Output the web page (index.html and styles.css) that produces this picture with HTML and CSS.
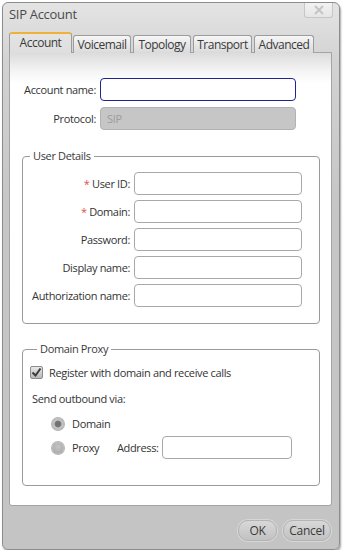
FILE: index.html
```html
<!DOCTYPE html>
<html lang="en">

<head>
    <meta charset="UTF-8">
    <title>SIP Account</title>
    <link rel="stylesheet" href="styles.css">
</head>

<body>
    <div class="window">
        <div class="titlebar">
            <span class="title">SIP Account</span>
            <span class="close">
                <svg width="12" height="10" viewBox="0 0 12 10">
                    <path d="M2 1 L10 9 M10 1 L2 9" stroke="#c4c4c4" stroke-width="2" fill="none" />
                </svg>
            </span>
        </div>

        <div class="tabs">
            <div class="tab active">Account</div>
            <div class="tab">Voicemail</div>
            <div class="tab">Topology</div>
            <div class="tab">Transport</div>
            <div class="tab">Advanced</div>
        </div>

        <div class="panel">
            <div class="row">
                <label class="labl wide">Account name:</label>
                <input class="field focus" type="text">
            </div>
            <div class="row">
                <label class="labl wide">Protocol:</label>
                <div class="field disabled">SIP</div>
            </div>

            <fieldset class="group details">
                <legend>User Details</legend>
                <div class="row">
                    <label class="labl"><span class="req">*</span> User ID:</label>
                    <input class="field" type="text">
                </div>
                <div class="row">
                    <label class="labl"><span class="req">*</span> Domain:</label>
                    <input class="field" type="text">
                </div>
                <div class="row">
                    <label class="labl">Password:</label>
                    <input class="field" type="password">
                </div>
                <div class="row">
                    <label class="labl">Display name:</label>
                    <input class="field" type="text">
                </div>
                <div class="row">
                    <label class="labl">Authorization name:</label>
                    <input class="field" type="text">
                </div>
            </fieldset>

            <fieldset class="group proxy">
                <legend>Domain Proxy</legend>
                <div class="check-row">
                    <span class="checkbox">
                        <svg width="11" height="11" viewBox="0 0 11 11">
                            <path d="M1.5 5.5 L4.5 8.5 L9.5 1.5" stroke="#3a3a3a" stroke-width="2" fill="none" />
                        </svg>
                    </span>
                    Register with domain and receive calls
                </div>
                <div class="send">Send outbound via:</div>
                <div class="radio-row">
                    <span class="radio on"></span>
                    <span class="radio-text">Domain</span>
                </div>
                <div class="radio-row">
                    <span class="radio"></span>
                    <span class="radio-text">Proxy</span>
                    <span class="addr">Address:</span>
                    <input class="field address" type="text">
                </div>
            </fieldset>
        </div>

        <div class="footer">
            <button class="btn ok">OK</button>
            <button class="btn cancel">Cancel</button>
        </div>
    </div>
</body>

</html>
```

FILE: styles.css
```css
body {
    margin: 0;
    background-color: #ffffff;
    font-family: 'Open Sans', 'Noto Sans', sans-serif;
    font-size: 11px;
    letter-spacing: -0.35px;
    color: #333333;
}

.window {
    margin: 2px 0 0 2px;
    width: 338px;
    height: 548px;
    box-sizing: border-box;
    border: 1px solid #8c8c8c;
    border-radius: 6px;
    background: linear-gradient(#e4e4e4 0px, #d2d2d2 60px, #c6c6c6 200px, #c4c4c4 100%);
    box-shadow: 1px 2px 2px rgba(0, 0, 0, 0.35);
    display: flex;
    flex-direction: column;
}

.titlebar {
    height: 30px;
    display: flex;
    justify-content: space-between;
    align-items: flex-start;
    padding: 0 6px 0 6px;
}

.title {
    font-size: 13px;
    letter-spacing: -0.3px;
    color: #4a4a4a;
    margin-top: 2px;
}

.close {
    width: 29px;
    height: 15px;
    box-sizing: border-box;
    border: 1px solid #c6c6c6;
    border-top: none;
    border-radius: 0 0 3px 3px;
    background: linear-gradient(#f2f2f2, #e6e6e6);
    display: flex;
    justify-content: center;
    align-items: center;
}

.tabs {
    display: flex;
    align-items: flex-end;
    height: 20px;
    padding-left: 6px;
    margin-bottom: -1px;
    position: relative;
    z-index: 1;
}

.tab {
    height: 18px;
    box-sizing: border-box;
    border: 1px solid #9c9c9c;
    border-bottom: none;
    border-radius: 3px 3px 0 0;
    background: linear-gradient(#f6f6f6, #dadada);
    font-size: 12px;
    letter-spacing: -0.5px;
    line-height: 17px;
    text-align: center;
    color: #3a3a3a;
    margin-left: 2px;
    width: 58px;
}

.tab:nth-child(2) {
    margin-left: 1px;
}

.tab:nth-child(4) {
    width: 59px;
}

.tab:nth-child(5) {
    width: 60px;
}

.tab.active {
    height: 21px;
    width: 63px;
    margin-left: 0;
    border-top: 2px solid #f0b236;
    background: linear-gradient(#e4e4e4, #dedede);
    line-height: 18px;
}

.panel {
    margin: 0 7px 0 6px;
    height: 454px;
    box-sizing: border-box;
    border: 1px solid #a4a4a4;
    border-radius: 0 0 3px 3px;
    background: linear-gradient(#dcdcdc 0px, #f4f4f4 18px, #ffffff 30px);
    padding-top: 25px;
    display: flex;
    flex-direction: column;
    gap: 6px;
}

.row {
    display: flex;
    align-items: center;
    gap: 4px;
    height: 23px;
}

.labl {
    width: 107px;
    text-align: right;
    white-space: nowrap;
}

.labl.wide {
    width: 86px;
}

.req {
    color: #e05050;
}

.field {
    width: 196px;
    height: 23px;
    box-sizing: border-box;
    border: 1px solid #a8a8a8;
    border-radius: 4px;
    background-color: #ffffff;
    font-family: 'Open Sans', 'Noto Sans', sans-serif;
    font-size: 11px;
    padding: 0 6px;
    margin: 0;
}

.field:focus {
    outline: none;
}

.field.focus {
    border: 1px solid #1f2490;
}

.field.disabled {
    background-color: #c6c6c6;
    border-color: #b2b2b2;
    color: #9c9c9c;
    line-height: 21px;
}

.group {
    margin: 13px 11px 0 12px;
    padding: 9px 0 16px 0;
    border: 1px solid #9a9a9a;
    border-radius: 4px;
    min-width: 0;
}

.group legend {
    margin-left: 7px;
    padding: 0 3px;
    line-height: 14px;
    color: #3a3a3a;
}

.details {
    display: flex;
    flex-direction: column;
    gap: 5px;
}

.details .field {
    width: 168px;
}

.proxy {
    margin-top: 12px;
    padding: 8px 0 26px 7px;
}

.check-row {
    display: flex;
    align-items: center;
    gap: 6px;
    height: 16px;
}

.checkbox {
    width: 13px;
    height: 13px;
    box-sizing: border-box;
    border: 1px solid #8c8c8c;
    border-radius: 2px;
    background: linear-gradient(#e8e8e8, #b8b8b8);
    display: flex;
    justify-content: center;
    align-items: center;
}

.send {
    margin: 12px 0 0 2px;
    line-height: 14px;
}

.radio-row {
    display: flex;
    align-items: center;
    height: 23px;
    margin-left: 22px;
    margin-top: 1px;
}

.send + .radio-row {
    margin-top: 6px;
}

.radio {
    width: 12px;
    height: 12px;
    border-radius: 50%;
    background: radial-gradient(circle at 50% 40%, #c4c4c4, #a2a2a2);
    box-shadow: 0 0 0 1px #b6b6b6;
    margin-right: 8px;
}

.radio.on {
    background: radial-gradient(circle, #6c6c6c 0px, #7a7a7a 3px, #d0d0d0 4px, #a8a8a8 6px);
}

.radio-text {
    width: 45px;
}

.addr {
    margin-right: 3px;
}

.field.address {
    width: 130px;
}

.footer {
    flex: 1;
    display: flex;
    justify-content: flex-end;
    align-items: flex-start;
    gap: 6px;
    padding: 14px 8px 0 0;
}

.btn {
    height: 21px;
    padding: 0;
    border: 1px solid #b4b4b4;
    border-radius: 10px;
    background: linear-gradient(#d8d8d8, #c2c2c2);
    box-shadow: 0 0 0 1px #d6d6d6;
    font-family: 'Open Sans', 'Noto Sans', sans-serif;
    font-size: 12px;
    letter-spacing: -0.3px;
    color: #3a3a3a;
    cursor: pointer;
}

.btn.ok {
    width: 39px;
}

.btn.cancel {
    width: 48px;
}
```
